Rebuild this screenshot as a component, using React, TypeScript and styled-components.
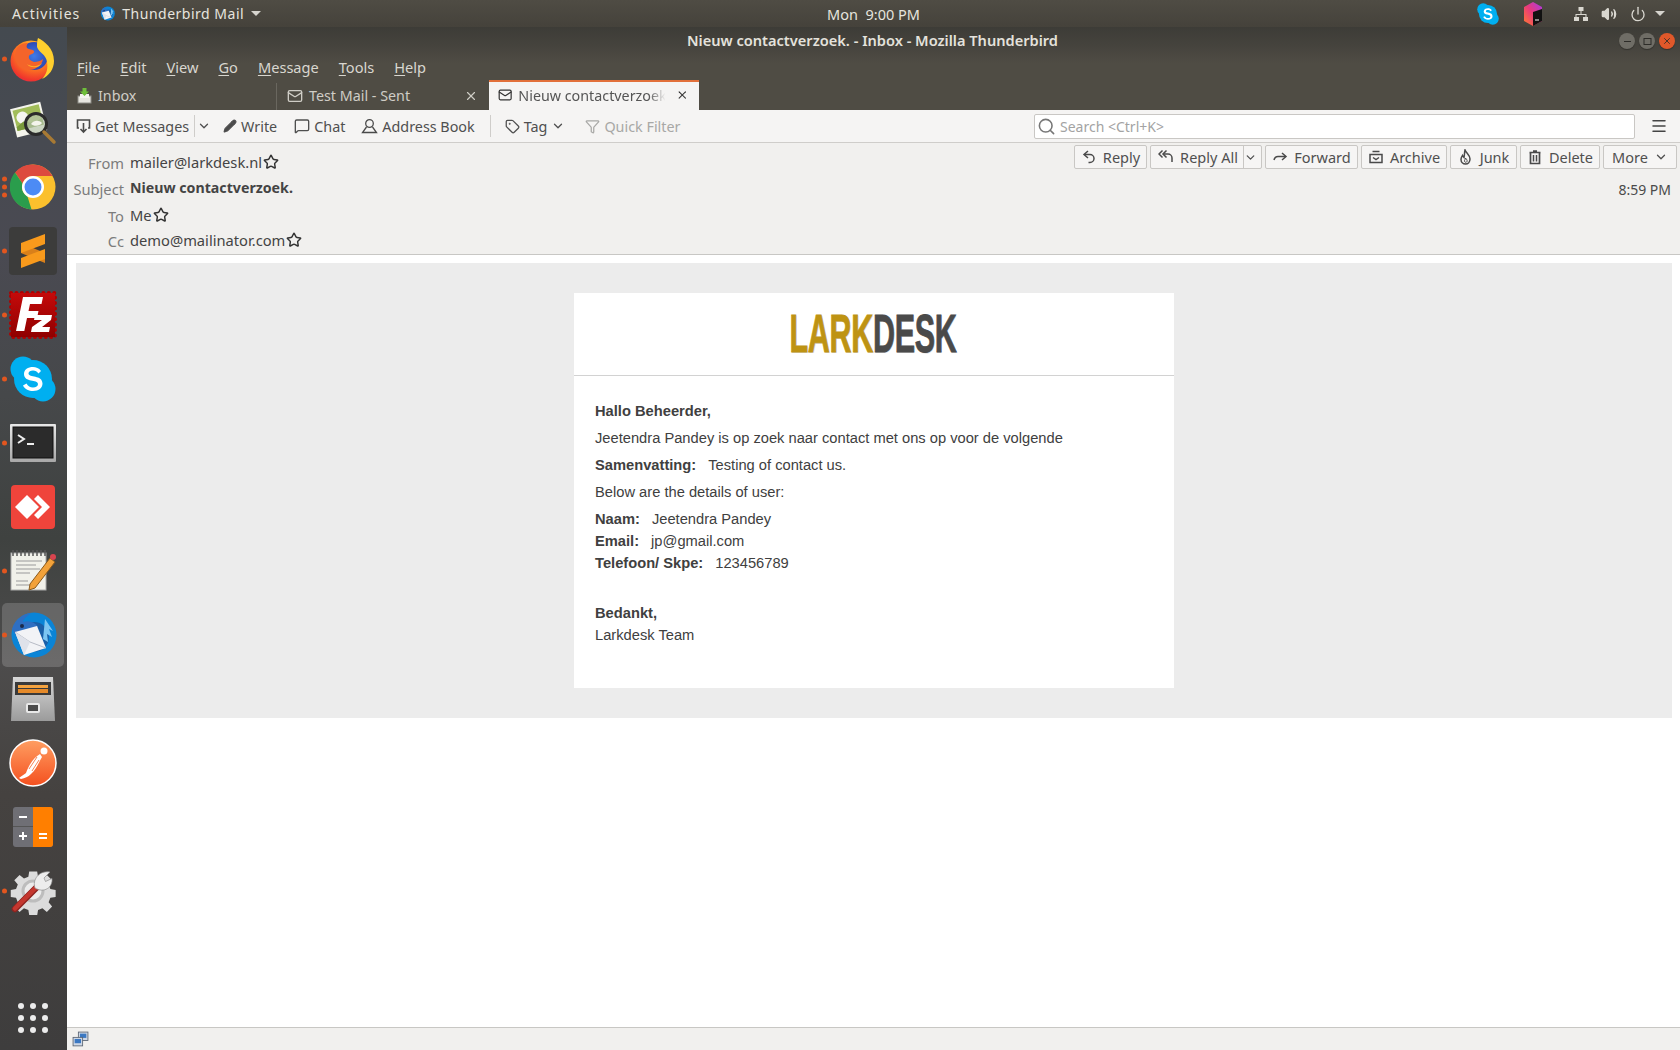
import React from 'react';
import styled, { createGlobalStyle } from 'styled-components';
import { ChevronDown, X, Menu as MenuIcon, Search, Star, Tag, Filter, Mail, Pencil, MessageSquare, Volume2, Power } from 'lucide-react';

const UI = `"Noto Sans", "Open Sans", sans-serif`;
const Global = createGlobalStyle`
  html, body { margin: 0; padding: 0; width: 1680px; height: 1050px; overflow: hidden; background: #fff; font-family: ${UI}; }
  * { box-sizing: border-box; }
`;
const Root = styled.div`width: 1680px; height: 1050px; display: flex; flex-direction: column; overflow: hidden;`;
const TopBar = styled.div`height: 27px; flex: none; display: flex; align-items: center; padding: 0 15px 0 12px; color: #e6e4de; font-size: 14px;
  background: linear-gradient(#4f4c44, #45423b);`;
const TopLeft = styled.div`flex: 1; display: flex; align-items: center; gap: 20px;`;
const TopLabel = styled.span`letter-spacing: 1px;`;
const TopApp = styled.div`display: flex; align-items: center; gap: 7px; letter-spacing: .5px;`;
const TopClock = styled.div`flex: none; width: 200px; text-align: center; margin-left: 70px; font-size: 14.5px;`;
const TopRight = styled.div`flex: 1; display: flex; align-items: center; justify-content: flex-end;`;
const Tray = styled.span<{ $w: number }>`display: block; flex: none; width: ${p => p.$w}px;`;
const Arrow = styled.span`width: 0; height: 0; border-left: 5px solid transparent; border-right: 5px solid transparent; border-top: 5px solid #d6d4ce;`;
const Body = styled.div`flex: 1; display: flex; min-height: 0;`;
const Dock = styled.div`width: 67px; flex: none; display: flex; flex-direction: column; align-items: center; position: relative; padding-right: 1px;
  background: linear-gradient(#444a50 0%, #4a4a52 22%, #46484a 36%, #3f4240 50%, #4d4c4c 62%, #454240 75%, #3e3d3d 100%);`;
const DockItem = styled.div<{ $active?: boolean }>`width: 62px; height: 64px; flex: none; display: flex; align-items: center; justify-content: center; border-radius: 5px;
  ${p => p.$active ? 'background: rgba(255,255,255,.17);' : ''} position: relative;`;
const Pips = styled.div`position: absolute; left: 0; top: 50%; transform: translateY(-50%); display: flex; flex-direction: column; gap: 3px;`;
const Pip = styled.span`width: 5px; height: 5px; border-radius: 50%; background: #e2561f; display: block;`;
const GridButton = styled.div`margin-top: auto; margin-bottom: 17px; display: grid; grid-template-columns: repeat(3, 6px); gap: 6px;`;
const GridDot = styled.span`width: 6px; height: 6px; border-radius: 50%; background: #ececec;`;
const Win = styled.div`flex: 1; min-width: 0; display: flex; flex-direction: column;`;
const Chrome = styled.div`height: 83px; flex: none; display: flex; flex-direction: column; background: linear-gradient(#3d3c37 0, #45433d 18px, #4f4c44 36px, #4f4c44 100%);`;
const TitleBar = styled.div`height: 26px; flex: none; display: flex; align-items: center; position: relative; padding: 2px 5px 0 0; justify-content: flex-end;`;
const Title = styled.div`position: absolute; left: 0; right: 2px; text-align: center; color: #e4e2dc; font-size: 14.6px; font-weight: 600; line-height: 22px; top: 2px;`;
const WinBtn = styled.div<{ $c?: string }>`width: 16px; height: 16px; margin-left: 4px; border-radius: 50%; background: ${p => p.$c || '#6f6d66'}; color: #2d2c28; display: flex; align-items: center; justify-content: center; box-shadow: 0 1px 1px rgba(0,0,0,.3); position: relative;`;
const MenuBar = styled.div`height: 27px; flex: none; display: flex; align-items: center; padding: 1px 0 0 10px; gap: 20px; color: #d9d7d0; font-size: 14.6px;`;
const U = styled.span`text-decoration: underline; text-underline-offset: 2px;`;
const TabRow = styled.div`height: 30px; flex: none; display: flex; align-items: flex-end;`;
const Tab = styled.div<{ $w: number; $active?: boolean; $sep?: boolean }>`height: ${p => p.$active ? '30px' : '27px'}; width: ${p => p.$w}px; flex: none; display: flex; align-items: center; padding: 0 ${p => p.$active ? 10 : 11}px 2px ${p => p.$active ? 9 : 10}px; gap: 6px; font-size: 14.3px;
  color: ${p => p.$active ? '#555' : '#cfcdc6'}; background: ${p => p.$active ? '#f5f4f3' : 'transparent'};
  border-top: ${p => p.$active ? '2px solid #e2703a' : 'none'}; ${p => p.$sep ? 'border-left: 1px solid #6a675f;' : ''}`;
const TabLabel = styled.span<{ $fade?: boolean }>`flex: 1; white-space: nowrap;
  ${p => p.$fade ? '-webkit-mask-image: linear-gradient(90deg, #000 86%, transparent 97%);' : ''}`;
const Toolbar = styled.div`height: 33px; flex: none; display: flex; align-items: center; padding: 0 10px 0 9px; background: #f5f4f3; border-bottom: 1px solid #cfcdca; color: #4f4f4f; font-size: 14.35px;`;
const TBtn = styled.div<{ $ml?: number; $off?: boolean }>`display: flex; align-items: center; gap: 4px; margin-left: ${p => p.$ml || 0}px; white-space: nowrap; ${p => p.$off ? 'color: #a8a8a6;' : ''}`;
const TSep = styled.div<{ $ml: number; $mr?: number; $h?: number }>`width: 1px; height: ${p => p.$h || 22}px; background: #cfcdca; margin-left: ${p => p.$ml}px; margin-right: ${p => p.$mr || 0}px;`;
const SearchBox = styled.div`width: 601px; height: 25px; margin-left: auto; background: #fff; border: 1px solid #c9c7c4; border-radius: 2px; display: flex; align-items: center; gap: 4px; padding: 0 2px 0 2px; color: #a3a3a3; font-size: 14px;`;
const Burger = styled.div`margin-left: 15px; margin-right: 2px; display: flex; color: #444;`;
const Headers = styled.div`height: 112px; flex: none; position: relative; background: #f1f0ee; border-bottom: 1px solid #c8c7c4; padding-top: 6px; color: #4a4a4a; font-size: 14.7px;`;
const HRow = styled.div<{ $h: number }>`height: ${p => p.$h}px; display: flex; align-items: center;`;
const HLabel = styled.div`width: 57px; flex: none; text-align: right; color: #7c7c7c; margin-right: 6px; margin-top: 2px;`;
const HValue = styled.div<{ $bold?: boolean }>`font-weight: ${p => p.$bold ? 700 : 400}; ${p => p.$bold ? 'font-size: 14.2px;' : ''} display: flex; align-items: center; gap: 1px; color: #444;`;
const Actions = styled.div`position: absolute; top: 2px; right: 3px; display: flex; gap: 3px;`;
const ABtn = styled.div<{ $w: number }>`width: ${p => p.$w}px; height: 24px; background: #f6f5f4; border: 1px solid #c9c7c4; border-radius: 2px; display: flex; align-items: center; justify-content: center; gap: 6px; font-size: 14.5px; color: #505050;`;
const ASplit = styled.div`height: 100%; border-left: 1px solid #c9c7c4; width: 15px; display: flex; align-items: center; justify-content: center; flex: none; margin-left: -1px; margin-right: -4px;`;
const Time = styled.div`position: absolute; right: 9px; top: 37px; color: #4a4a4a; font-size: 14px;`;
const Content = styled.div`flex: 1; min-height: 0; background: #fff; padding: 8px 8px 0 9px;`;
const Mailbody = styled.div`height: 455px; background: #ececec; padding-top: 30px; display: flex; justify-content: center;`;
const Card = styled.div`width: 600px; height: 395px; background: #fff; display: flex; flex-direction: column; font-family: "Liberation Sans", Arial, sans-serif; font-size: 14.7px; color: #404040;`;
const LogoRow = styled.div`height: 83px; flex: none; border-bottom: 1px solid #d2d2d2; display: flex; align-items: center; justify-content: center; padding-bottom: 1px;`;
const Logo = styled.div`width: 170px; display: flex; justify-content: center; overflow: visible; white-space: nowrap; font-family: "Liberation Sans", sans-serif; font-weight: 700; font-size: 53px; line-height: 60px; transform: translateX(-1px) scaleX(.575); letter-spacing: -.5px; -webkit-text-stroke: .9px currentColor; text-shadow: 1px 1px 0 #ddd;`;
const LogoA = styled.span`color: #be9313;`;
const LogoB = styled.span`color: #4a4a4a;`;
const Text = styled.div`padding: 27px 21px 0;`;
const P = styled.div<{ $mb?: number }>`line-height: 17px; margin-bottom: ${p => p.$mb ?? 10}px;`;
const Spacer = styled.div`height: 28px;`;
const Line = styled.div`line-height: 22px;`;
const K = styled.b`font-weight: 700; margin-right: 12px;`;
const Status = styled.div`height: 23px; flex: none; background: #f1f0ee; border-top: 1px solid #c8c7c4; display: flex; align-items: center; padding-left: 5px;`;

const FirefoxIcon = () => <svg width="46" height="46" viewBox="0 0 46 46"><defs>
  <radialGradient id="ff1" cx=".6" cy=".25" r=".9"><stop offset="0" stopColor="#ffd43b"/><stop offset=".4" stopColor="#ff8a1f"/><stop offset=".8" stopColor="#f0352c"/><stop offset="1" stopColor="#d81c6a"/></radialGradient>
  <radialGradient id="ff2" cx=".5" cy=".5" r=".6"><stop offset="0" stopColor="#3f7be8"/><stop offset="1" stopColor="#2a3fa8"/></radialGradient></defs>
  <circle cx="21" cy="25" r="20.500" fill="url(#ff1)"/><circle cx="24" cy="20" r="14" fill="url(#ff2)"/>
  <path d="M28 2c6 3 16 10 16 23 0 8-5 15-12 18 5-5 6-11 5-17-1-8-8-9-10-15 0-4 0-6 1-9z" fill="#ffcf2e"/>
  <path d="M7 12c3-4 7-5 11-5-1 2-2 3-1 5 2 2 6 1 7 3 1 3-4 3-5 5-1 3 2 5 5 6 3 0 7-1 9-3-1 6-7 11-14 11-9 0-15-8-14-15 0-3 1-5 2-7z" fill="#f4642a"/>
  <path d="M17 28c4 3 11 3 15-1-2 5-12 6-15 1z" fill="#ffb02a"/></svg>;
const ImageViewerIcon = () => <svg width="48" height="48" viewBox="0 0 48 48">
  <g transform="rotate(-14 20 20)"><rect x="4" y="6" width="31" height="29" fill="#f4f4ec"/><rect x="6" y="8" width="27" height="21" fill="#a2bd5a"/><circle cx="14" cy="17" r="6" fill="#f5f5f0"/><path d="M6 25l8-4 10 4 9-3v7H6z" fill="#7a9b3c"/></g>
  <circle cx="27" cy="25" r="10.500" fill="#b9c7b0" fillOpacity=".7" stroke="#2b2b2b" strokeWidth="3"/><path d="M22 25c3-4 8-4 11-1-2 3-8 4-11 1z" fill="#f4f4ec"/>
  <path d="M35 33l10 10" stroke="#a87a34" strokeWidth="3.500" strokeLinecap="round"/></svg>;
const ChromeIcon = () => <svg width="46" height="46" viewBox="0 0 46 46">
  <circle cx="23" cy="23" r="22.500" fill="#fbc02d"/>
  <path d="M23 .5A22.500 22.500 0 0 1 42.500 12H23a11 11 0 0 0-10.500 7.500L5 8.500A22.500 22.500 0 0 1 23 .5z" fill="#dd4b3e"/>
  <path d="M5 8.500L12.500 19.500A11 11 0 0 0 17.500 32.500L21.500 45.400A22.500 22.500 0 0 1 5 8.500z" fill="#2a9d4c"/>
  <circle cx="23" cy="23" r="11" fill="#fff"/><circle cx="23" cy="23" r="8.500" fill="#4c8bf5"/></svg>;
const SublimeIcon = () => <svg width="48" height="48" viewBox="0 0 48 48"><rect width="48" height="48" rx="4" fill="#3c3c3b"/>
  <path d="M12 16L36 26v10L12 26z" fill="#d9801a"/><path d="M12 16L36 7v10L12 26z" fill="#f89a1c"/><path d="M12 31L36 22v10L12 41z" fill="#f89a1c"/></svg>;
const FilezillaIcon = () => <svg width="48" height="48" viewBox="0 0 48 48"><defs><linearGradient id="fz" x1="0" y1="0" x2="0" y2="1"><stop offset="0" stopColor="#c40a0a"/><stop offset="1" stopColor="#8f0000"/></linearGradient></defs>
  <rect x="2" y="2" width="44" height="44" fill="url(#fz)" stroke="#b00000" strokeWidth="4" strokeDasharray="0.1 5.300" strokeLinecap="round"/><rect x="2" y="2" width="44" height="44" fill="url(#fz)"/>
  <path d="M7 40L14 6h20l-1.500 7H21l-1.500 7h10l-1.500 7H18l-2.700 13z" fill="#fff"/><path d="M26 24h17l-1 5-9 7h8l-1 5H22l1-5 10-7h-8z" fill="#fff"/></svg>;
const SkypeIcon = ({ s = 46 }: { s?: number }) => <svg width={s} height={s} viewBox="0 0 46 46"><circle cx="13" cy="13" r="12.500" fill="#00aff0"/><circle cx="33" cy="33" r="12.500" fill="#00aff0"/><circle cx="23" cy="23" r="19" fill="#00aff0"/>
  <path d="M31 15c-2-3-5-4-8-4-5 0-9 2.500-9 7 0 9 14 5 14 10 0 2-2 3.500-5 3.500-3 0-5-1.500-6.500-4l-3.500 2c2 4 6 5.500 10 5.500 6 0 9.500-3 9.500-7.500 0-9-14-5.500-14-10 0-2 2-3 4.500-3s4 1 5.500 3z" fill="#fff"/></svg>;
const TerminalIcon = () => <svg width="46" height="38" viewBox="0 0 46 38"><defs><linearGradient id="tm" x1="0" y1="0" x2="0" y2="1"><stop offset="0" stopColor="#e8e8e8"/><stop offset="1" stopColor="#a8a8a8"/></linearGradient></defs><rect width="46" height="38" rx="1" fill="url(#tm)"/><rect x="3" y="3" width="40" height="31" fill="#2b2b2b" stroke="#111"/>
  <path d="M8 11l6 4-6 4" stroke="#eee" strokeWidth="2" fill="none"/><path d="M17 20h7" stroke="#eee" strokeWidth="2"/></svg>;
const AnydeskIcon = () => <svg width="44" height="44" viewBox="0 0 44 44"><rect width="44" height="44" rx="4" fill="#ef443b"/><path d="M16 10l12 12-12 12L4 22z" fill="#fff"/><path d="M27 10l12 12-12 12-4-4 8-8-8-8z" fill="#fff"/></svg>;
const NotepadIcon = () => <svg width="48" height="46" viewBox="0 0 48 46"><rect x="2" y="5" width="35" height="37" fill="#f1f1ea" stroke="#aaa"/><path d="M4 2v6M8 2v6M12 2v6M16 2v6M20 2v6M24 2v6M28 2v6M32 2v6M36 2v6" stroke="#555" strokeWidth="1.500"/>
  <path d="M7 13h26M7 17h20M7 21h24M7 25h14M7 33h12M7 37h14" stroke="#999" strokeWidth="1.200"/><path d="M21 36L41 10l5 4-20 26-6 2z" fill="#f2a23a" stroke="#8a5a1c"/><circle cx="44" cy="9" r="3" fill="#d9444f"/></svg>;
const ThunderbirdIcon = ({ s = 48 }: { s?: number }) => <svg width={s} height={s} viewBox="0 0 48 48"><circle cx="25" cy="24" r="22.500" fill="#0a84d6"/><circle cx="25" cy="26" r="15" fill="#1a5fa8"/>
  <path d="M3 18C6 8 14 3 22 2c-4 3-8 6-8 9 6-2 12 0 15 5L9 28z" fill="#2f6fc2"/><circle cx="13" cy="15" r="2" fill="#1d2b4a"/><path d="M36 8l8 12-4-2 3 8-5-3 1 8-5-3z" fill="#7cc5f2"/>
  <path d="M6 21l22-6 9 22-22 7z" fill="#f2f3f6"/><path d="M6 21l15 10 16 6" stroke="#b8bcc6" fill="none"/><path d="M6 21l15 10-6 13" fill="#dfe2ea"/></svg>;
const FilesIcon = () => <svg width="48" height="48" viewBox="0 0 48 48"><defs><linearGradient id="fc" x1="0" y1="0" x2="0" y2="1"><stop offset="0" stopColor="#d8d8d8"/><stop offset="1" stopColor="#9b9b9b"/></linearGradient></defs>
  <path d="M4 2h40l2 44H2z" fill="url(#fc)"/><rect x="6" y="7" width="36" height="13" fill="#3a3a3a"/><rect x="9" y="10" width="30" height="3" fill="#f4a340"/><rect x="9" y="14" width="30" height="4" fill="#e58a2a"/><rect x="17" y="28" width="14" height="10" rx="2" fill="#e8e8e8"/><rect x="19" y="30" width="10" height="6" fill="#4a4a4a"/></svg>;
const PostmanIcon = () => <svg width="48" height="48" viewBox="0 0 48 48"><defs><linearGradient id="pm" x1="0" y1="0" x2="0" y2="1"><stop offset="0" stopColor="#ff9e62"/><stop offset="1" stopColor="#f4501f"/></linearGradient></defs>
  <circle cx="24" cy="24" r="23" fill="url(#pm)" stroke="#fff" strokeWidth="1.500"/><circle cx="35" cy="12" r="3.500" fill="#fff"/><path d="M31 15c-7 4-12 13-14 19-2 2-5 3-7 5l2 1c4-1 7-2 10-5 5-4 8-12 11-17z" fill="#fff"/><path d="M20 30l8-12M23 32l7-11" stroke="#f4642a" strokeWidth=".8"/></svg>;
const CalcIcon = () => <svg width="40" height="40" viewBox="0 0 40 40"><rect width="40" height="40" rx="3" fill="#6f6f75"/><path d="M20 0h17a3 3 0 0 1 3 3v34a3 3 0 0 1-3 3H20z" fill="#ff7f00"/><path d="M0 19.500h20" stroke="#555"/><path d="M6 10h8M6 29h8M10 25v8" stroke="#fff" strokeWidth="2"/><path d="M26 27h8M26 31h8" stroke="#fff" strokeWidth="2"/></svg>;
const SettingsIcon = () => <svg width="48" height="48" viewBox="0 0 48 48"><path d="M20 2h9l1 6 5 2 5-4 6 6-4 5 2 5 6 1v8l-6 1-2 5 4 5-6 6-5-4-5 2-1 6h-9l-1-6-5-2-5 4-6-6 4-5-2-5-6-1v-8l6-1 2-5-4-5 6-6 5 4 5-2z" fill="#dcdcdc" transform="scale(.88) translate(3 3)"/><circle cx="24" cy="24" r="11.500" fill="#bdbdbd"/><circle cx="24" cy="24" r="8.500" fill="#ececec"/>
  <path d="M6 42L29 19" stroke="#8e2420" strokeWidth="6.500" strokeLinecap="round"/><path d="M6 41.500L29 18.500" stroke="#c4372f" strokeWidth="4.500" strokeLinecap="round"/><path d="M26 21c-3-8 4-18 15-16l-6 6 1.500 3.500 6.500-3c1 9-8 15-17 9.500z" fill="#ededed" stroke="#8f8f8f" strokeWidth=".7"/></svg>;

const GetIcon = () => <svg width="15" height="16" viewBox="0 0 15 16" fill="none" stroke="#4a4a4a" strokeWidth="1.600"><path d="M3 10H1.500V2h12v8H12"/><path d="M7.500 5v9M4.500 11l3 3 3-3"/></svg>;
const BookIcon = () => <svg width="17" height="16" viewBox="0 0 17 16" fill="none" stroke="#4a4a4a" strokeWidth="1.300"><circle cx="8.500" cy="5.500" r="3.800"/><path d="M5.500 9L1.500 14.500h14L11.500 9"/></svg>;
const InboxIcon = () => <svg width="15" height="16" viewBox="0 0 15 16"><rect x="1" y="8" width="13" height="7" fill="#e7e6e0" stroke="#8d8c86"/><path d="M3 6h9v4H3z" fill="#f4f4f0"/><path d="M5.500 0h4v3.500H12L7.500 8 3 3.500h2.500z" fill="#6fbf3a"/></svg>;
const NetworkIcon = () => <svg width="16" height="16" viewBox="0 0 16 16" fill="#d9d7d0"><rect x="5.500" y="1" width="5" height="4"/><rect x="1" y="11" width="5" height="4"/><rect x="10" y="11" width="5" height="4"/><path d="M7.500 5h1v3h5v3h-1V9H3.500v2h-1V8h5z"/></svg>;
const RiderIcon = () => <svg width="20" height="24" viewBox="0 0 20 24"><defs><linearGradient id="rd" x1="0" y1="1" x2="1" y2="0"><stop offset="0" stopColor="#ff7b2e"/><stop offset=".5" stopColor="#e83a7a"/><stop offset="1" stopColor="#a63ae8"/></linearGradient></defs><path d="M10 0l9 5v14l-9 5-9-5V5z" fill="url(#rd)"/><path d="M10 10l9-3v12l-9 5z" fill="#111"/><path d="M12 18h4" stroke="#fff" strokeWidth="1"/></svg>;
const StatusIcon = () => <svg width="17" height="17" viewBox="0 0 16 16"><rect x="6" y="1" width="9" height="8" fill="#cfd8e6" stroke="#5a6472" strokeWidth=".8"/><rect x="7.500" y="2.500" width="6" height="4" fill="#3b78c2"/><rect x="1" y="6" width="9" height="8" fill="#cfd8e6" stroke="#5a6472" strokeWidth=".8"/><rect x="2.500" y="7.500" width="6" height="4" fill="#3b78c2"/></svg>;

const Act: React.FC<{ children: React.ReactNode }> = ({ children }) => <svg width="16" height="16" viewBox="0 0 16 16" fill="none" stroke="#4a4a4a" strokeWidth="1.500">{children}</svg>;
const ReplyI = () => <Act><path d="M7 2L3 5.500 7 9"/><path d="M3.500 5.500H9a4 4 0 0 1 0 8H7.500"/></Act>;
const ReplyAllI = () => <Act><path d="M4.500 1.500L1 5l3.500 3.500"/><path d="M8.500 1.500L5 5l3.500 3.500"/><path d="M5.500 5H10a4 4 0 0 1 4 4v4"/></Act>;
const ForwardI = () => <Act><path d="M10 4l4 3.500-4 3.500"/><path d="M13.500 7.500H6c-2 0-3.500 1.500-4 3.500"/></Act>;
const ArchiveI = () => <Act><path d="M4.500 2.500h7"/><path d="M2 5.500h12v8H2z"/><path d="M5 8.500l3 2 3-2"/></Act>;
const JunkI = () => <Act><path d="M7 1c1 3 5 5 5 9 0 3-2 5-4.500 5S3 13 3 10.500c0-2 1-3 1.500-4 .5 1 1 1.500 1.500 2C6.500 6 6.500 3 7 1z"/><path d="M7.500 9c1 1.500 2 2 1.500 3.500-.5 1-2 1-2.500 0-.5-1 1-2 1-3.500z" strokeWidth="1"/></Act>;
const DeleteI = () => <Act><path d="M6 2h4M2.500 3.500h11"/><path d="M3.500 4v10.500h9V4" strokeWidth="1.700"/><path d="M6.500 6v6.500M9.500 6v6.500"/></Act>;

const dock: { icon: React.ReactNode; pips?: number; active?: boolean }[] = [
  { icon: <FirefoxIcon />, pips: 1 }, { icon: <ImageViewerIcon /> }, { icon: <ChromeIcon />, pips: 3 }, { icon: <SublimeIcon />, pips: 1 },
  { icon: <FilezillaIcon />, pips: 1 }, { icon: <SkypeIcon />, pips: 1 }, { icon: <TerminalIcon />, pips: 1 }, { icon: <AnydeskIcon /> },
  { icon: <NotepadIcon />, pips: 1 }, { icon: <ThunderbirdIcon />, pips: 1, active: true }, { icon: <FilesIcon /> }, { icon: <PostmanIcon /> },
  { icon: <CalcIcon /> }, { icon: <SettingsIcon />, pips: 1 },
];
const Fav = () => <Star size={16} strokeWidth={2.2} color="#333" />;
export default function App() {
  return <Root><Global />
    <TopBar>
      <TopLeft><TopLabel>Activities</TopLabel><TopApp><ThunderbirdIcon s={15} />Thunderbird Mail<Arrow /></TopApp></TopLeft>
      <TopClock>Mon&nbsp; 9:00 PM</TopClock>
      <TopRight>
        <SkypeIcon s={22} /><Tray $w={24} /><RiderIcon /><Tray $w={30} /><NetworkIcon /><Tray $w={12} /><Volume2 size={16} color="#d9d7d0" fill="#d9d7d0" /><Tray $w={13} /><Power size={16} color="#d9d7d0" /><Tray $w={9} /><Arrow />
      </TopRight>
    </TopBar>
    <Body>
      <Dock>
        {dock.map((d, i) => <DockItem key={i} $active={d.active}>{d.pips ? <Pips>{Array.from({ length: d.pips }).map((_, j) => <Pip key={j} />)}</Pips> : null}{d.icon}</DockItem>)}
        <GridButton>{Array.from({ length: 9 }).map((_, i) => <GridDot key={i} />)}</GridButton>
      </Dock>
      <Win>
        <Chrome>
          <TitleBar>
            <Title>Nieuw contactverzoek. - Inbox - Mozilla Thunderbird</Title>
            <WinBtn><svg width="9" height="9"><path d="M1 4.500h7" stroke="#2d2c28"/></svg></WinBtn>
            <WinBtn><svg width="9" height="9"><rect x="1" y="1.500" width="7" height="6" fill="none" stroke="#2d2c28"/></svg></WinBtn>
            <WinBtn $c="#e0582a"><X size={10} strokeWidth={2} /></WinBtn>
          </TitleBar>
          <MenuBar>
            <span><U>F</U>ile</span><span><U>E</U>dit</span><span><U>V</U>iew</span><span><U>G</U>o</span><span><U>M</U>essage</span><span><U>T</U>ools</span><span><U>H</U>elp</span>
          </MenuBar>
          <TabRow>
            <Tab $w={209}><InboxIcon /><TabLabel>Inbox</TabLabel></Tab>
            <Tab $w={213} $sep><Mail size={16} /><TabLabel>Test Mail - Sent</TabLabel><X size={14} /></Tab>
            <Tab $w={210} $active><Mail size={16} color="#333" strokeWidth={2} /><TabLabel $fade>Nieuw contactverzoek.</TabLabel><X size={14} color="#333" /></Tab>
          </TabRow>
        </Chrome>
        <Toolbar>
          <TBtn><GetIcon />Get Messages</TBtn>
          <TSep $ml={5} $mr={2} />
          <ChevronDown size={14} strokeWidth={2.2} />
          <TBtn $ml={12}><Pencil size={14} fill="#4a4a4a" />Write</TBtn>
          <TBtn $ml={17}><MessageSquare size={16} />Chat</TBtn>
          <TBtn $ml={16}><BookIcon />Address Book</TBtn>
          <TSep $ml={15} />
          <TBtn $ml={14}><Tag size={15} />Tag<ChevronDown size={14} strokeWidth={2.2} /></TBtn>
          <TBtn $ml={20} $off><Filter size={15} />Quick Filter</TBtn>
          <SearchBox><Search size={19} color="#777" />Search &lt;Ctrl+K&gt;</SearchBox>
          <Burger><MenuIcon size={18} /></Burger>
        </Toolbar>
        <Headers>
          <HRow $h={25}><HLabel>From</HLabel><HValue>mailer@larkdesk.nl<Fav /></HValue></HRow>
          <HRow $h={27}><HLabel>Subject</HLabel><HValue $bold>Nieuw contactverzoek.</HValue></HRow>
          <HRow $h={27}><HLabel>To</HLabel><HValue>Me<Fav /></HValue></HRow>
          <HRow $h={24}><HLabel>Cc</HLabel><HValue>demo@mailinator.com<Fav /></HValue></HRow>
          <Actions>
            <ABtn $w={73}><ReplyI />Reply</ABtn>
            <ABtn $w={112}><ReplyAllI />Reply All<ASplit><ChevronDown size={13} strokeWidth={2.4} /></ASplit></ABtn>
            <ABtn $w={93}><ForwardI />Forward</ABtn>
            <ABtn $w={86}><ArchiveI />Archive</ABtn>
            <ABtn $w={67}><JunkI />Junk</ABtn>
            <ABtn $w={80}><DeleteI />Delete</ABtn>
            <ABtn $w={74}>More<ChevronDown size={14} strokeWidth={2.2} /></ABtn>
          </Actions>
          <Time>8:59 PM</Time>
        </Headers>
        <Content>
          <Mailbody>
            <Card>
              <LogoRow><Logo><LogoA>LARK</LogoA><LogoB>DESK</LogoB></Logo></LogoRow>
              <Text>
                <P><b>Hallo Beheerder,</b></P>
                <P>Jeetendra Pandey is op zoek naar contact met ons op voor de volgende</P>
                <P><K>Samenvatting:</K>Testing of contact us.</P>
                <P $mb={7}>Below are the details of user:</P>
                <Line><K>Naam:</K>Jeetendra Pandey</Line>
                <Line><K>Email:</K>jp@gmail.com</Line>
                <Line><K>Telefoon/ Skpe:</K>123456789</Line>
                <Spacer />
                <Line><b>Bedankt,</b></Line>
                <Line>Larkdesk Team</Line>
              </Text>
            </Card>
          </Mailbody>
        </Content>
        <Status><StatusIcon /></Status>
      </Win>
    </Body>
  </Root>;
}
